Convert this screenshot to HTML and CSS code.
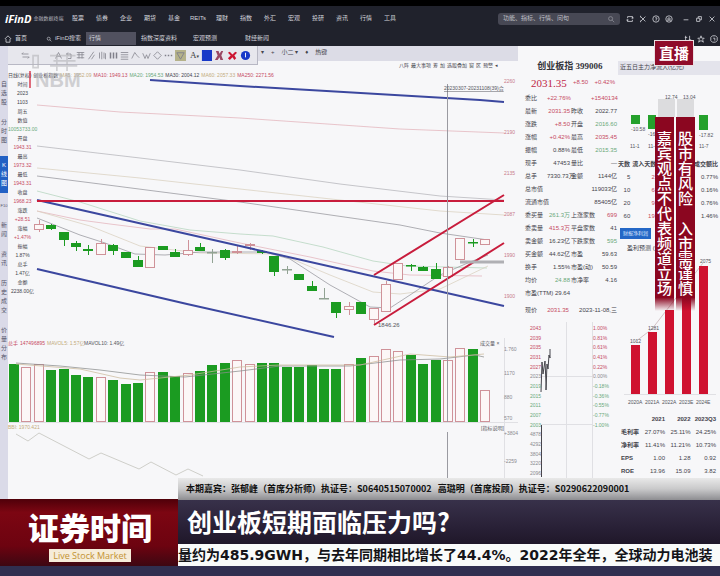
FILE: index.html
```html
<!DOCTYPE html>
<html lang="zh-CN">
<head>
<meta charset="utf-8">
<meta name="viewport" content="width=device-width, initial-scale=1">
<title>iFinD 创业板指</title>
<link rel="stylesheet" href="styles.css">
</head>
<body>
<div class="screen">
  <header class="topbar">
    <div class="menu-row">
      <div class="brand"><b>iFinD</b><small>金融数据终端</small></div>
      <nav class="menu">
        <a href="#">股票</a><a href="#">债券</a><a href="#">企业</a><a href="#">期货</a><a href="#">基金</a><a href="#">REITs</a><a href="#">理财</a><a href="#">指数</a><a href="#">外汇</a><a href="#">宏观</a><a href="#">投研</a><a href="#">资讯</a><a href="#">行情</a><a href="#">工具</a>
      </nav>
      <div class="search">
        <input type="text" aria-label="搜索" placeholder="功能、指标、行情、问句">
        <svg class="ico" viewBox="0 0 10 10"><circle cx="4.5" cy="4.5" r="2.5"/><path d="M6.5 6.5 9 9"/></svg>
      </div>
      <div class="window-tools">
        <button aria-label="刷新"><svg class="ico" viewBox="0 0 10 10"><path d="M2 4V2h6v2M8 2 9 4 7 4M8 6v2H2V6M2 8 1 6h2"/></svg></button>
        <button aria-label="剪切"><svg class="ico" viewBox="0 0 10 10"><path d="M2 2l6 6M8 2 2 8M2 1v2M2 7v2"/></svg></button>
        <button aria-label="帮助"><svg class="ico" viewBox="0 0 10 10"><circle cx="5" cy="5" r="4"/><path d="M4 3.5h2V5L5 6v1"/></svg></button>
        <button aria-label="账户"><svg class="ico" viewBox="0 0 10 10"><circle cx="5" cy="5" r="4"/><circle cx="5" cy="5" r="1.5"/><path d="M3 8l1-2M7 8 6 6"/></svg></button>
        <button class="split" aria-label="最小化"><svg class="ico" viewBox="0 0 10 10"><path d="M2 6h6"/></svg></button>
        <button aria-label="还原"><svg class="ico" viewBox="0 0 10 10"><path d="M2 4h4v4H2zM4 4V2h4v4H6"/></svg></button>
        <button aria-label="关闭"><svg class="ico" viewBox="0 0 10 10"><path d="M2 2l6 6M8 2 2 8"/></svg></button>
      </div>
    </div>
    <div class="tab-row">
      <a class="tab home" href="#"><svg class="ico" viewBox="0 0 10 10"><path d="M1 5 5 1l4 4M2.500 5v4h5V5"/></svg>首页</a>
      <a class="tab find" href="#"><svg class="ico" viewBox="0 0 10 10"><circle cx="4.500" cy="4.500" r="2.500"/><path d="M6.500 6.500 9 9"/></svg>iFinD搜索</a>
      <a class="tab active" href="#">行情</a>
      <a class="tab" href="#">指数深度资料</a>
      <a class="tab" href="#">宏观预测</a>
      <a class="tab" href="#">财经新闻</a>
      <div class="tab-tools">
        <button aria-label="布局"><svg class="ico" viewBox="0 0 10 10"><path d="M2 1v8M1 3h3M7 1v8M6 6h3"/></svg></button>
        <button aria-label="收藏"><svg class="ico" viewBox="0 0 10 10"><path d="M5 1l1 3h3L7 6l1 3-3-2-3 2 1-3-2-2h3z"/></svg></button>
        <button aria-label="设置"><svg class="ico" viewBox="0 0 10 10"><path d="M3 1h4l2 2v4L7 9H3L1 7V3zM4 4h2v3"/></svg></button>
      </div>
    </div>
  </header>

  <main class="workspace">
    <nav class="rail">
      <a href="#">自选股</a><a href="#">分时图</a><a class="on" href="#">K线图</a><a class="flat-label" href="#">F10</a><a href="#">新闻</a><a href="#">资讯</a><a href="#">历史成交</a><a href="#">价量分布</a>
    </nav>

    <section class="chart-area">
      <div class="toolbar">
        <div class="draw-tools">
          <button aria-label="返回"><svg class="tool" viewBox="0 0 12 12"><path d="M1 4h9M1 4l2-2M11 8H2m9 0L9 10"/></svg></button>
          <span class="spacer"></span>
          <button aria-label="指针"><svg class="tool" viewBox="0 0 12 12"><path d="M2 10 6 2l4 8M4 7h4"/></svg></button>
          <button aria-label="撤销"><svg class="tool" viewBox="0 0 12 12"><path d="M4 2 2 4l2 2M2 4h6v6H4"/></svg></button>
          <button aria-label="平行线"><svg class="tool" viewBox="0 0 12 12"><path d="M1 2h10M1 5h10M1 9h10M4 2v8M8 2v8"/></svg></button>
          <button aria-label="线段"><svg class="tool" viewBox="0 0 12 12"><path d="M2 11 9 1M6 11l4-6"/></svg></button>
          <button aria-label="竖线"><svg class="tool" viewBox="0 0 12 12"><path d="M2 2v8M5 1v10M8 2v8M10 3v8"/></svg></button>
          <button aria-label="周期线"><svg class="tool bold" viewBox="0 0 12 12"><path d="M2 2v8M6 2v8M10 2v8"/></svg></button>
          <button aria-label="水平线"><svg class="tool" viewBox="0 0 12 12"><path d="M1 2h10M1 5h10M1 8h10M1 11h10"/></svg></button>
          <button aria-label="波浪"><svg class="tool" viewBox="0 0 12 12"><path d="M1 10 5 2l3 4 3 3"/></svg></button>
          <button aria-label="W线"><svg class="tool" viewBox="0 0 12 12"><path d="M1 3l3 7 2-5 2 5 3-7"/></svg></button>
          <button aria-label="形状"><svg class="tool" viewBox="0 0 12 12"><path d="M6 1l5 5-5 5-5-5z"/></svg></button>
          <button aria-label="更多"><svg class="tool bold" viewBox="0 0 12 12"><path d="M1 6h2M5 6h2M9 6h2"/></svg></button>
          <button class="wide" aria-label="标注"><svg class="tool" viewBox="0 0 12 12"><path class="note" d="M0 0h12v12H0z"/><path d="M2 3h8L6 10z"/></svg></button>
          <button class="wide text" aria-label="文字">A<i>▾</i></button>
          <button class="wide" aria-label="颜色"><svg class="tool" viewBox="0 0 12 12"><path class="blue" d="M1 0h11v12H1z"/></svg></button>
          <button class="wide" aria-label="删除一条"><svg class="tool" viewBox="0 0 12 12"><path class="plum" d="M2 1h3l1 3 2-3h2L8 6l2 5H7L6 8l-2 3H1l3-5z"/></svg></button>
          <button class="wide" aria-label="清空"><svg class="tool" viewBox="0 0 12 12"><path class="red" d="M1 3l2-1 3 3 3-3 2 1-3 3 2 3-2 2-2-3-3 3-2-2 3-3z"/></svg></button>
          <button class="wide" aria-label="设置"><svg class="tool" viewBox="0 0 12 12"><circle class="blue" cx="6" cy="6" r="5"/><path class="white" d="M6 3v5"/></svg></button>
        </div>
        <div class="size-tools"><span>▾</span><span>+</span><span>小二 ▾</span><span>♦</span><span>热键</span></div>
      </div>
      <div class="sub-tools"><span>八阵</span><span>最大事项</span><span>筹</span><span>加</span><span>选股叠加</span><span>窗</span><span>区</span><span>预警</span><span>◂</span></div>
      <div class="ma-row"><span>日线(复权)</span><span>创业板指数</span><span class="tan">MA5: 1952.09</span><span class="crim">MA10: 1949.13</span><span class="sage">MA20: 1954.53</span><span>MA30: 2004.12</span><span class="tan">MA60: 2057.33</span><span class="crim">MA250: 2271.56</span></div>
      <div class="price-row">
        <ul class="info">
          <li>时间</li><li>2023</li><li>1103</li><li>周五</li><li>数值</li><li class="sage">10053733.00</li><li>开盘</li><li class="crim">1943.31</li><li>最高</li><li class="crim">1973.32</li><li>最低</li><li class="crim">1943.31</li><li>收盘</li><li class="crim">1968.23</li><li>涨跌</li><li class="crim">+28.51</li><li>涨幅</li><li class="crim">+1.47%</li><li>振幅</li><li>1.87%</li><li>总手</li><li>1.47亿</li><li>金额</li><li>2238.00亿</li>
        </ul>
        <svg class="plot" viewBox="37 80 481 258">
          <g class="ma">
            <polyline class="pink" points="37,105 120,112 240,118 400,129 504,133"/>
            <polyline class="gray" points="37,146 140,158 240,170 340,184 440,196 504,200"/>
            <polyline class="sand" points="37,168 140,178 240,189 340,200 440,211 504,215"/>
            <polyline class="dark" points="37,176 100,184 240,202 400,225 440,233 488,240"/>
            <polyline class="green" points="37,191 80,202 140,221 190,230 240,234 273,236 323,247 373,261 407,266 487,268"/>
            <polyline class="pink" points="37,211 80,220 110,224 150,229 175,229 240,243 310,257 373,271 410,275 482,276"/>
            <polyline class="sand" points="37,211 90,226 140,246 200,253 280,254 330,275 373,292 400,294 440,289 488,266"/>
            <polyline class="dark" points="37,218 80,235 105,243 135,254 165,255 200,252 240,252 265,252 290,259 330,285 370,307 390,308 410,295 440,275 470,262 488,255"/>
          </g>
          <g id="candles"></g>
          <g class="trend">
            <path class="blue-line" d="M150 80 240 86 480 100 504 102M37 200 240 246 504 306M37 269 187 304 334 337"/>
            <path class="red-line" d="M37 201H504M374 275 504 195M374 325 504 243"/>
            <path class="band" d="M460 262H504"/>
          </g>
          <path class="cursor" d="M447.5 84V338"/>
          <g class="tick">
            <text x="444" y="90" class="range">20230307-20231108(39)合</text>
            <text x="378" y="327">1846.26</text>
          </g>
          <g class="axis">
            <text x="504" y="83">2260</text><text x="504" y="134">2190</text><text x="504" y="175">2135</text><text x="504" y="216">2087</text><text x="504" y="257">1990</text><text x="504" y="298">1900</text>
          </g>
        </svg>
      </div>
      <svg class="plot" viewBox="8 338 510 84">
        <g class="tick small"><text x="8" y="345" class="crim">总手</text><text x="20" y="345" class="crim">147496895</text><text x="47" y="345" class="tan">MAVOL5: 1.57亿</text><text x="84" y="345">MAVOL10: 1.49亿</text><text x="480" y="345">成交量 ×</text></g>
        <g id="volumes"></g>
        <polyline class="vol-dark" points="16,363 60,366 100,370 140,375 185,377 240,371 280,366 350,366 400,360 440,359 475,355 484,357"/>
        <polyline class="vol-sand" points="16,364 80,369 120,378 140,380 190,375 240,367 280,365 360,365 410,354 450,357 484,354"/>
        <path class="cursor" d="M447.5 338V422"/><path class="frame" d="M504.5 338V422"/>
        <g class="axis dim"><text x="504" y="351">1.760</text><text x="504" y="375">1170</text><text x="504" y="399">880</text><text x="504" y="420">570</text></g>
      </svg>
      <svg class="plot" viewBox="8 422 510 56">
        <g class="tick small"><text x="8" y="429" class="tan">BBI: 1970.421</text><text x="481" y="430">[指标说明]</text></g>
        <polyline class="osc" points="16,434 28,441 39,433 89,459 101,453 139,469 151,462 176,475 188,469 203,476"/>
        <path class="cursor" d="M447.5 432V478"/><path class="frame" d="M504.5 422V478M8 422.5H518"/>
        <g class="axis dim"><text x="504" y="435">+3804</text><text x="504" y="463">-2259</text></g>
      </svg>
    </section>

    <section class="quote">
      <h1>创业板指 399006</h1>
      <p class="last"><b>2031.35</b><span>+8.50</span><span>+0.42%</span></p>
      <table class="facts">
        <tr><th>委比</th><td class="crim">+22.76%</td><th></th><td class="crim">+1540134</td></tr>
        <tr><th>最新</th><td class="crim">2031.35</td><th>昨收</th><td>2022.77</td></tr>
        <tr><th>涨跌</th><td class="crim">+8.50</td><th>开盘</th><td class="sage">2016.60</td></tr>
        <tr><th>涨幅</th><td class="crim">+0.42%</td><th>最高</th><td class="crim">2035.45</td></tr>
        <tr><th>振幅</th><td>0.88%</td><th>最低</th><td class="sage">2015.35</td></tr>
        <tr><th>现手</th><td>47453</td><th>量比</th><td>—</td></tr>
        <tr><th>总手</th><td>7330.73万</td><th>金额</th><td>1144亿</td></tr>
        <tr><th>总市值</th><td colspan="3">119033亿</td></tr>
        <tr><th>流通市值</th><td colspan="3">85405亿</td></tr>
        <tr><th>委买量</th><td class="sage">261.3万</td><th>上涨家数</th><td class="crim">699</td></tr>
        <tr><th>委卖量</th><td class="crim">415.3万</td><th>平盘家数</th><td>41</td></tr>
        <tr><th>卖金额</th><td>16.23亿</td><th>下跌家数</th><td class="sage">595</td></tr>
        <tr><th>买金额</th><td>44.62亿</td><th>市盈</th><td>59.63</td></tr>
        <tr><th>换手</th><td>1.55%</td><th>市盈(动)</th><td>50.59</td></tr>
        <tr><th>均价</th><td class="sage">24.88</td><th>市净率</th><td>4.16</td></tr>
        <tr><th>市盈(TTM)</th><td>29.64</td><th></th><td></td></tr>
      </table>
      <p class="day"><span>现价</span><span class="crim">2031.35</span><span>2023-11-08,三</span></p>
      <svg class="plot" viewBox="518 320 100 158">
        <path class="frame" d="M541 376.5H593M541 424.5H593M566.5 322V478M592.5 322V478"/>
        <path class="intraday" d="M541 392l1-30 1 12 2-13 1 22v7l1-26 1 5 1-14 1 3v-9"/>
        <path class="intraday" d="M541.5 425V477"/>
        <g id="scale" class="axis"></g>
      </svg>
    </section>

    <section class="finance">
      <h2>近五日主力净流入(亿元)</h2>
      <svg class="plot" viewBox="618 75 102 80">
        <path class="fill-green" d="M631 115h9v9h-9zM648 115h8v14h-8zM699 115h9v15h-9z"/>
        <path class="fill-gray" d="M658 99h17v18h-17zM677 99h17v18h-17z"/>
        <g class="tick small"><text x="665" y="99">12.74</text><text x="683" y="99">13.04</text><text x="631" y="131">-10.58</text><text x="648" y="136">-16</text><text x="699" y="137">-17.82</text><text x="630" y="148">11-1</text><text x="648" y="148">11-</text><text x="699" y="148">11-7</text></g>
      </svg>
      <table class="flow">
        <tr><th>天数</th><th>流入天数</th><th>占成交额比</th></tr>
        <tr><td>5</td><td class="crim">2</td><td>0.77%</td></tr>
        <tr><td>10</td><td class="crim">6</td><td>0.16%</td></tr>
        <tr><td>20</td><td class="crim">9</td><td>0.76%</td></tr>
        <tr><td>60</td><td class="crim">19</td><td>1.46%</td></tr>
      </table>
      <button class="pill">财报净利润</button>
      <p class="forecast">盈利预测 (亿</p>
      <svg class="plot" viewBox="618 256 102 156">
        <path class="guide" d="M635 343 652 330 669 308 703 264"/>
        <path class="fill-red" d="M631 346h9v49h-9zM648 333h9v62h-9zM665 311h9v84h-9zM682 296h9v99h-9zM699 267h9v128h-9z"/>
        <path class="frame" d="M624 395.5H716"/>
        <g class="tick small"><text x="630" y="344">1012</text><text x="648" y="331">1281</text><text x="700" y="264">2075</text><text x="628" y="405">2020A</text><text x="645" y="405">2021A</text><text x="662" y="405">2022A</text><text x="679" y="405">2023E</text><text x="696" y="405">2024E</text></g>
      </svg>
      <table class="ratios">
        <tr><th></th><th>2021</th><th>2022</th><th>2023Q3</th></tr>
        <tr><th>毛利率</th><td>27.07%</td><td>25.11%</td><td>24.25%</td></tr>
        <tr><th>净利率</th><td>11.41%</td><td>11.21%</td><td>10.73%</td></tr>
        <tr><th>EPS</th><td>1.00</td><td>1.28</td><td>0.92</td></tr>
        <tr><th>ROE</th><td>13.96</td><td>15.09</td><td>3.82</td></tr>
      </table>
    </section>
  </main>

  <footer class="lower-third">
    <div class="show"><strong>证券时间</strong><span>Live Stock Market</span></div>
    <div class="captions">
      <p class="guests">本期嘉宾：张郁峰（首席分析师）执证号：S0640515070002 &nbsp; 高璐明（首席投顾）执证号：S0290622090001</p>
      <h2 class="topic">创业板短期面临压力吗?</h2>
      <p class="ticker">量约为485.9GWH，与去年同期相比增长了44.4%。2022年全年，全球动力电池装</p>
    </div>
  </footer>

  <div class="station"><svg viewBox="0 0 54 20"><path d="M0 2h6v14H0zM20 2h30M24 8h26M20 14h32M28 0v20M40 0v20"/></svg><span>NBM</span></div>
  <div class="live">直播</div>
  <div class="notice"><p>嘉宾观点不代表频道立场</p><p>股市有风险　入市需谨慎</p></div>
</div>
<script src="chart.js"></script>
</body>
</html>
```
FILE: styles.css
```css
* { box-sizing: border-box; }
body { margin: 0; background: #302f50; color: #44444c; font: 6px/9px "Liberation Sans", "Noto Sans CJK SC", sans-serif; }
a { color: inherit; text-decoration: none; }
p, h1, h2, ul { margin: 0; padding: 0; }
button { margin: 0; padding: 0; border: 0; background: none; color: inherit; font: inherit; line-height: 0; }
table { border-collapse: collapse; }
th, td { padding: 0; font-weight: 400; }
svg { display: block; }

.screen { position: relative; min-height: 100vh; display: flex; flex-direction: column; overflow: hidden; background: #302f50; }
.crim { color: #c64a62; fill: #c64a62; }
.sage { color: #69a87a; fill: #69a87a; }
.tan { color: #c3ab7c; fill: #c3ab7c; }

.topbar { border-top: 6px solid #000; background: #20222c; color: #d4d5dc; }
.menu-row { display: flex; align-items: center; height: 25px; padding: 0 4px 0 5px; }
.brand { display: flex; align-items: center; gap: 2px; width: 61px; }
.brand b { color: #fff; font: italic 700 11px/12px "Open Sans", sans-serif; }
.brand small { font-size: 5px; color: #b4b5bd; }
.menu { display: flex; }
.menu a { width: 24px; text-align: center; white-space: nowrap; }
.search { display: flex; align-items: center; width: 122px; height: 12px; margin-left: auto; padding: 0 5px; border-radius: 3px; background: #474854; }
.search input { flex: 1; min-width: 0; border: 0; padding: 0; background: none; color: #fff; font: inherit; }
.search input::placeholder { color: #c0c0c8; opacity: 1; }
.ico { width: 8px; height: 8px; fill: none; stroke: currentColor; stroke-width: 1; }
.window-tools { display: flex; gap: 5px; padding-left: 6px; }
.window-tools .split { margin-left: 4px; }
.search .ico { opacity: .5; }
.tab-row { display: flex; align-items: center; height: 15px; padding: 0 2px 0 4px; }
.tab { display: flex; align-items: center; gap: 3px; width: 52px; height: 13px; padding-left: 3px; white-space: nowrap; }
.home { width: 42px; padding: 0; }
.find { width: 40px; padding: 0; }
.find .ico { width: 6px; height: 6px; }
.active { width: 50px; margin-right: 2px; background: #51515f; }
.tab-tools { display: flex; gap: 5px; margin-left: auto; }

.workspace { display: grid; grid-template-columns: 8px minmax(0, 510fr) minmax(0, 100fr) minmax(0, 102fr); background: #f7f7f9; }
.rail { display: flex; flex-direction: column; gap: 11px; padding: 34px 1px 0; background: #dadae8; color: #55556a; text-align: center; }
.rail a { word-break: break-all; }
.rail .on { margin: 0 -1px; padding: 5px 1px; background: #2260c4; color: #fff; }
.rail .flat-label { margin: -3px -1px 0; font-size: 4px; word-break: normal; }

.toolbar { display: flex; height: 15px; background: #dcdce6; }
.draw-tools { display: flex; align-items: center; flex: 0 0 250px; height: 19px; padding: 0 4px 0 13px; border: solid #b8b8c4; border-width: 0 1px 1px 0; background: #e7e7ed; }
.spacer { flex: 1; }
.draw-tools button { width: 11px; }
.draw-tools .wide { width: 13px; }
.draw-tools .text { font: 9px/12px "Liberation Serif", serif; color: #444; }
.draw-tools i { font: 5px/6px "DejaVu Sans", sans-serif; }
.tool { width: 9px; height: 9px; fill: none; stroke: #80808a; stroke-width: 1; }
.wide .tool { width: 11px; height: 11px; }
.bold { stroke-width: 2; }
.note { fill: #b5b28a; stroke: none; }
.blue { fill: #1738c8; stroke: none; }
.plum { fill: #9a4863; stroke: none; }
.red { fill: #cc1531; stroke: none; }
.white { stroke: #fff; }
.size-tools { display: flex; gap: 7px; padding: 2px 3px; }
.sub-tools { display: flex; justify-content: flex-end; gap: 2px; height: 9px; padding-right: 20px; margin-bottom: 1px; font-size: 5px; line-height: 9px; white-space: nowrap; }
.ma-row { display: flex; gap: 2px; height: 9px; font-size: 5px; line-height: 9px; white-space: nowrap; }
.price-row { display: grid; grid-template-columns: minmax(0, 29fr) minmax(0, 481fr); }
.info { list-style: none; text-align: center; font-size: 5px; white-space: nowrap; }
.plot { width: 100%; height: auto; overflow: visible; }

.ma polyline { fill: none; stroke-width: 1; opacity: .75; }
.ma .pink { stroke: #e3b3bb; }
.ma .gray { stroke: #b4b4ba; }
.ma .sand { stroke: #d9d0bf; }
.ma .dark { stroke: #96969c; }
.ma .green { stroke: #b4d4bd; }
.trend path { fill: none; }
.blue-line { stroke: #3b479f; stroke-width: 2; }
.red-line { stroke: #c81c3c; stroke-width: 2; }
.trend .band { stroke: #b0b0b4; stroke-width: 3; }
.cursor { stroke: #9a9aa1; fill: none; }
.frame { stroke: #e0e0e4; fill: none; }
.rise { fill: #fcf7f7; stroke: #cf9299; }
.fall { fill: #1b9b21; stroke: #1b9b21; }
.flat { fill: #92a394; stroke: #92a394; }
.vol-dark, .vol-sand, .osc { fill: none; stroke: #8b8d8e; opacity: .75; }
.vol-sand { stroke: #ccbb9e; }
.osc { stroke: #cfcfca; opacity: 1; }
.tick { font-size: 6px; fill: #55555c; }
.tick .range { font-size: 5px; text-decoration: underline; }
.small { font-size: 5px; }
.axis { font-size: 5px; fill: #c77b8b; }
.dim { fill: #8a8a90; }

.quote { padding-top: 14px; }
.quote h1 { padding-left: 4px; text-align: center; font: 700 9px/13px "Liberation Serif", "Noto Sans CJK SC", serif; color: #33333a; white-space: nowrap; }
.last { display: flex; align-items: center; justify-content: space-between; height: 19px; padding: 0 3px 0 13px; color: #c64a62; }
.last b { font: 11px/14px "Liberation Serif", serif; color: #c01f45; }
.facts { width: 100%; table-layout: fixed; white-space: nowrap; }
.facts tr { height: 13px; }
.facts th { text-align: left; width: 20%; }
.facts th:first-child { width: 29%; padding-left: 7px; }
.facts td { text-align: right; padding-right: 1px; }
.facts td:nth-child(2) { width: 24%; }
.day { display: flex; justify-content: space-between; height: 20px; padding: 6px 1px 0 7px; white-space: nowrap; }
.intraday { fill: none; stroke: #45454c; }

.finance h2 { margin-top: 15px; height: 14px; padding-left: 2px; background: #e4e4ec; font: 6px/13px "Liberation Sans", "Noto Sans CJK SC", sans-serif; white-space: nowrap; }
.fill-green { fill: #25a12c; }
.fill-gray { fill: #dcdcde; }
.fill-red { fill: #cf1230; }
.guide { fill: none; stroke: #d3c3c6; }
.flow { width: 100%; table-layout: fixed; white-space: nowrap; margin-top: 2px; }
.flow tr { height: 13px; }
.flow tr:first-child { height: 14px; }
.flow th { width: 24%; font-weight: 700; text-align: left; }
.flow th:first-child { width: 14%; }
.flow th:last-child { width: 62%; }
.flow td { text-align: right; padding-right: 2px; }
.flow th:last-child, .flow td:last-child { text-align: right; padding-right: 2px; }
.pill { display: block; width: 31px; height: 11px; margin: 5px 0 0 2px; background: #2467c6; color: #dce8ff; font-size: 5px; line-height: 11px; }
.forecast { height: 16px; padding: 5px 0 0 9px; }
.ratios { width: 100%; table-layout: fixed; margin-top: 2px; white-space: nowrap; }
.ratios tr { height: 13px; }
.ratios th { font-weight: 700; text-align: right; padding-right: 4px; }
.ratios th:first-child { text-align: left; padding-left: 3px; }
.ratios td { text-align: right; padding-right: 4px; }

.lower-third { position: relative; display: grid; grid-template-columns: minmax(0, 178fr) minmax(0, 542fr); align-items: end; background: linear-gradient(90deg, #dadae8 8px, #f7f7f9 8px); }
.show { display: flex; flex-direction: column; align-items: center; height: 67px; padding: 5px 0 0 2px; background: linear-gradient(#4f0009, #7c0612 20%, #6d0310 70%, #3d0712); }
.show strong { color: #fff; font: 900 31px/45px "Noto Sans CJK SC", sans-serif; }
.show span { padding: 0 4px; background: #f6ecd9; color: #c39231; font: 9px/13px "Open Sans", sans-serif; }
.captions { min-width: 0; }
.guests { height: 22px; padding-left: 8px; overflow: hidden; background: linear-gradient(#e9e9e9, #c9c9ca 50%, #8d8d91); color: #111; font: 700 9px/22px "Noto Sans CJK SC", sans-serif; white-space: nowrap; }
.topic { height: 44px; padding-left: 9px; background: linear-gradient(#38314a, #292137 60%, #1f1729); color: #fff; font: 700 25px/42px "Noto Sans CJK SC", sans-serif; white-space: nowrap; }
.ticker { height: 22px; overflow: hidden; background: #f9fbfa; color: #141418; font: 700 14px/22px "DejaVu Sans", "Noto Sans CJK SC", sans-serif; white-space: nowrap; }

.station { position: absolute; left: 29px; top: 54px; color: #b5b5b9; opacity: .6; font: 700 20px/18px "Liberation Sans", sans-serif; }
.station svg { width: 54px; height: 17px; fill: none; stroke: currentColor; stroke-width: 2; }
.station span { display: block; padding-left: 4px; border-left: 2px solid #d0102a; height: 17px; }
.live { position: absolute; right: 26px; top: 40px; padding: 0 4px; border: 1px solid #eadfe2; background: #8f0c2a; color: #fff; font: 700 15px/24px "Noto Sans CJK SC", sans-serif; }
.notice { position: absolute; right: 25px; top: 117px; display: flex; gap: 2px; }
.notice p { width: 19px; height: 194px; padding-top: 14px; background: linear-gradient(#8b0620 93%, #8b062000); color: #fff; font: 500 15px/19px "Noto Sans CJK SC", sans-serif; writing-mode: vertical-rl; }
```
FILE: chart.js
```js
const NS = "http://www.w3.org/2000/svg";
const STEP = 12.4;
const FIRST = 14;

function add(parent, name, attrs, text) {
  const node = document.createElementNS(NS, name);
  for (const key in attrs) node.setAttribute(key, attrs[key]);
  if (text) node.textContent = text;
  parent.appendChild(node);
}

// index, kind, body top, body bottom, wick top, wick bottom
const candles = [
  [2, "rise", 224, 230, 220, 232], [3, "fall", 225, 229, 224, 230], [4, "fall", 232, 240, 232, 246],
  [5, "fall", 243, 247, 241, 251], [6, "fall", 249, 251, 245, 255], [7, "rise", 243, 255, 239, 255],
  [8, "fall", 245, 251, 244, 255], [9, "fall", 252, 258, 252, 258], [10, "fall", 260, 267, 256, 267],
  [11, "rise", 247, 268, 247, 268], [12, "fall", 246, 250, 246, 250], [13, "fall", 252, 257, 249, 257],
  [14, "rise", 250, 255, 240, 256], [15, "fall", 247, 251, 243, 251], [16, "flat", 252, 252, 249, 263],
  [17, "fall", 250, 258, 249, 260], [18, "rise", 251, 253, 246, 254], [19, "rise", 244, 246, 243, 250],
  [20, "fall", 251, 253, 250, 254], [21, "fall", 256, 272, 256, 276], [22, "flat", 269, 269, 266, 274],
  [23, "fall", 274, 280, 274, 280], [24, "fall", 286, 291, 281, 291], [25, "flat", 298, 298, 288, 299],
  [26, "fall", 302, 313, 302, 318], [27, "rise", 306, 310, 302, 315], [28, "fall", 302, 314, 302, 314],
  [29, "rise", 308, 320, 308, 325], [30, "rise", 284, 312, 281, 312], [31, "rise", 263, 280, 263, 280],
  [32, "fall", 265, 266, 264, 271], [33, "fall", 267, 271, 266, 271], [34, "fall", 269, 279, 263, 279],
  [35, "rise", 267, 277, 266, 277], [36, "rise", 238, 260, 238, 260], [37, "fall", 242, 242, 239, 247],
  [38, "rise", 239, 245, 239, 245]
];
const candleLayer = document.getElementById("candles");
for (const [i, kind, top, bottom, high, low] of candles) {
  const x = Math.round(FIRST + i * STEP) + 0.5;
  add(candleLayer, "path", { class: kind, d: `M${x} ${high}V${low}` });
  add(candleLayer, "rect", { class: kind, x: x - 5, y: top + 0.5, width: 9, height: Math.max(bottom - top - 1, 0.5) });
}

const tops = [364, 367, 364, 370, 369, 375, 377, 377, 380, 384, 383, 372, 372, 376, 373, 371, 365, 363, 360, 364,
  363, 363, 367, 367, 365, 369, 369, 364, 358, 356, 349, 351, 355, 364, 360, 360, 348, 349, 390];
const rises = [1, 2, 7, 11, 14, 18, 19, 27, 29, 30, 31, 35, 36, 38];
const volumeLayer = document.getElementById("volumes");
tops.forEach((top, i) => {
  const x = Math.round(FIRST + i * STEP) - 4.5;
  add(volumeLayer, "rect", { class: rises.includes(i) ? "rise" : "fall", x, y: top + 0.5, width: 9, height: 421 - top });
});

const prices = ["2043", "2039", "2035", "2031", "2027", "2023", "2019", "2015", "2011", "2007", "2003", "4878", "4292", "3804", "3220", "2096"];
const shifts = ["1.00%", "0.81%", "0.61%", "0.41%", "0.22%", "0.00%", "-0.18%", "-0.36%", "-0.55%", "-0.77%", "-1.00%"];
const scale = document.getElementById("scale");
const tone = i => (i < 5 ? "crim" : i === 5 || i > 10 ? "" : "sage");
prices.forEach((label, i) => add(scale, "text", { class: tone(i) || "dim", x: 530, y: Math.round(330 + i * 9.67) }, label));
shifts.forEach((label, i) => add(scale, "text", { class: tone(i) || "dim", x: 593, y: Math.round(330 + i * 9.67) }, label));
```
